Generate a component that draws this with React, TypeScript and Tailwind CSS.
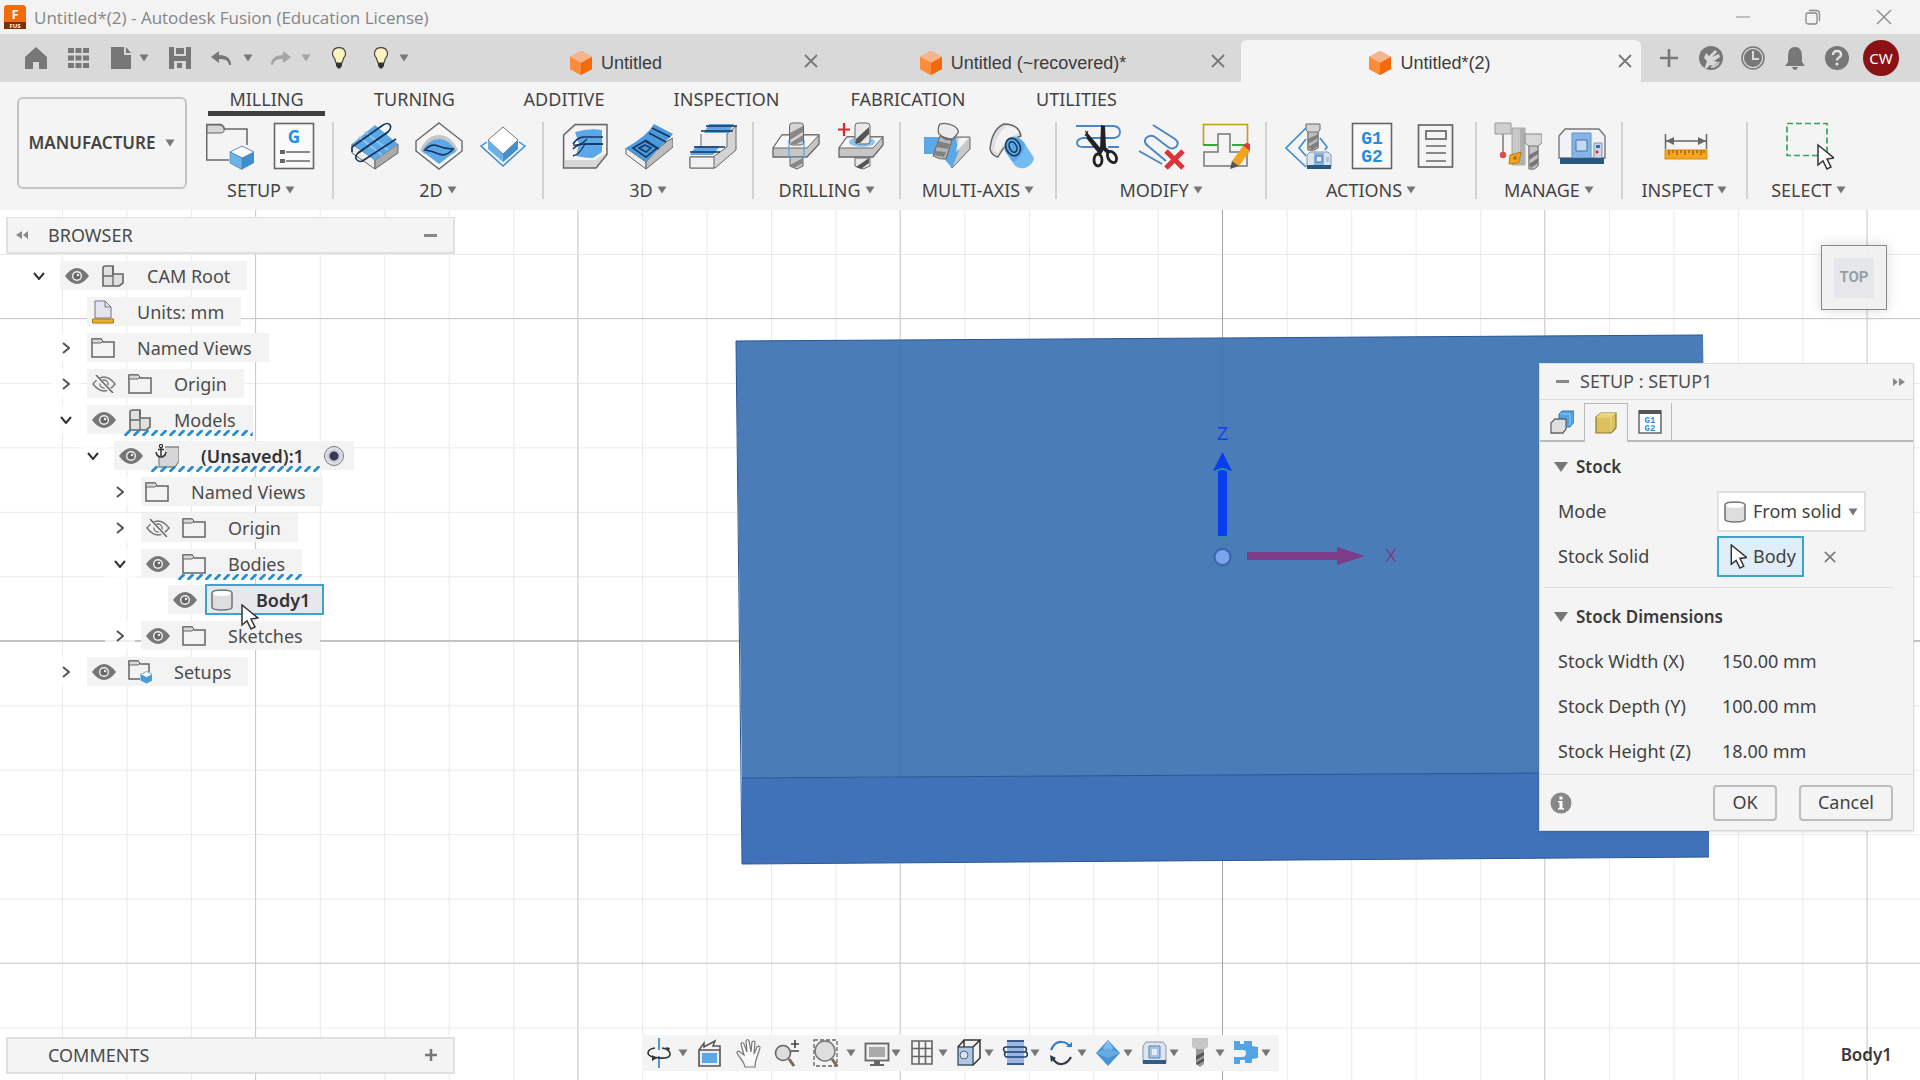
import React, { useId, useState } from "react";

type IconProps = { children: React.ReactNode; size?: string; box?: string };

function Svg({ children, size = "w-12 h-12", box = "0 0 48 48" }: IconProps) {
  return (
    <svg viewBox={box} className={`${size} shrink-0`} fill="none" aria-hidden="true">
      {children}
    </svg>
  );
}

const BLUE = "#5ca8e6";
const NAVY = "#15355c";
const LINE = "#666666";

function Caret({ className = "text-[#777777]" }: { className?: string }) {
  return (
    <svg viewBox="0 0 10 8" className={`h-2 w-[10px] shrink-0 ${className}`} aria-hidden="true">
      <path d="M0.5 0.5h9L5 7.5z" fill="currentColor" />
    </svg>
  );
}

/* ---------- Ribbon icons ---------- */

const SetupIcon = () => (
  <Svg>
    <path d="M23 38H0.700V2.500H14q3 0 4.500 4.500H41v16" stroke={LINE} strokeWidth="1.500" />
    <path d="M1 3h13q3 0 4 4t-4 4H1z" fill="#d6d6d6" stroke={LINE} />
    <path d="M36 24l12 6v11l-12 6.500-12-6.500V30z" fill="#3f8fce" />
    <path d="M36 24l12 6-12 6-12-6z" fill="#f8fbff" stroke="#4c7fa8" strokeWidth=".8" />
    <path d="M24 30l12 6v11.500L24 41z" fill="#6db4ea" stroke="#4c7fa8" strokeWidth=".6" />
  </Svg>
);

const GDocIcon = () => (
  <Svg>
    <rect x="4.500" y="1.500" width="39" height="45" fill="#fafafa" stroke={LINE} strokeWidth="1.600" />
    <text x="24" y="21" textAnchor="middle" fontFamily="Noto Sans, sans-serif" fontWeight="700" fontSize="17" fill="#1f8de0">G</text>
    <path d="M10 28h5v4h-5zM10 37h5v4h-5z" fill="#666" />
    <path d="M16 30h24M16 39h24" stroke={LINE} strokeWidth="1.400" />
  </Svg>
);

const Face2dIcon = () => (
  <Svg>
    <path d="M1 22v9l23 16V38z" fill="#ededed" stroke={LINE} />
    <path d="M47 22v9L24 47V38z" fill="#a9a9a9" stroke={LINE} />
    <path d="M24 3l23 19-23 16L1 22z" fill={BLUE} />
    <path d="M14 10l23 18M8 15l23 18" stroke="#8cc4f0" strokeWidth="2" />
    <path d="M1 25L32 3q5-3 7 0t-2 7L7 31q-4 4-1 7 3 3 7 0L45 17M1 25v5" stroke={NAVY} strokeWidth="1.600" />
    <path d="M7 31L37 10" stroke={NAVY} strokeWidth="1.600" />
  </Svg>
);

const Pocket2dIcon = () => (
  <Svg>
    <path d="M24 1l23 18v10L24 47 1 29V19z" fill="#f6f6f6" stroke={LINE} strokeWidth="1.400" />
    <path d="M5 28q7-15 19-15t19 15l-4 4H9z" fill="#c6c6c6" />
    <path d="M7 29q7-12 17-12t17 12L24 42z" fill={BLUE} />
    <path d="M10 28q6-7 13-4t15 3q-7 8-14 5t-14-4z" stroke={NAVY} strokeWidth="1.600" />
  </Svg>
);

const Contour2dIcon = () => (
  <Svg>
    <path d="M24 5l15 13-15 14L9 18z" fill="#fff" stroke="#777" />
    <path d="M9 18l15 14 15-14v9L24 40 9 27z" fill="#69b0e8" />
    <path d="M24 32l15-14v9L24 40z" fill="#478fcb" />
    <path d="M8 20l-6 4 22 20 22-20-6-4" stroke="#3c8fd0" strokeWidth="1.500" />
  </Svg>
);

const Adaptive3dIcon = () => (
  <Svg>
    <path d="M14 2.500h32v30L35 46H2.500V13z" fill="#d8d8d8" stroke={LINE} strokeWidth="1.400" />
    <path d="M15 4h30v27L34 38H4V14z" fill="#f4f4f4" />
    <path d="M14 10q14-4 27-2v22l-9 6q-9 0-17-2l3-12z" fill={BLUE} />
    <path d="M42 15H22q-6 1-10 7M42 22H24q-8 0-12 5" stroke={NAVY} strokeWidth="1.700" />
    <path d="M12 23q8 1 14-6M12 34q6-1 12-12h18" stroke={NAVY} strokeWidth="1.300" />
  </Svg>
);

const Surface3dIcon = () => (
  <Svg>
    <path d="M1 26l20 14v7L1 32z" fill="#eee" stroke={LINE} />
    <path d="M48 16v9L21 47v-7Q38 20 48 16z" fill="#bdbdbd" stroke={LINE} />
    <path d="M29 2l19 10Q38 22 21 40L1 26Q22 14 29 2z" fill="#4a9ade" />
    <path d="M27 6l18 9M24 11l17 9M20 18l14 9M20 19L8 26l13 9 11-9zM20 23l-6 3 7 4 5-4z" stroke={NAVY} strokeWidth="1.500" />
  </Svg>
);

const Steep3dIcon = () => (
  <Svg>
    <path d="M12 12h26v16H12z" fill="#f1f1f1" />
    <path d="M47 4v24L26 46H1V35h23l14-10V12z" fill="#d4d4d4" stroke={LINE} />
    <path d="M1 35h24v11H1z" fill="#f1f1f1" stroke={LINE} />
    <path d="M12 12v12" stroke={LINE} />
    <path d="M20 2h25l-6 9H15zM7 24h24l-7 9H1z" fill={BLUE} />
    <path d="M17 4h31M12 9h32M5 25h31M1 30h30" stroke={NAVY} strokeWidth="1.700" />
  </Svg>
);

const DrillIcon = () => (
  <Svg>
    <path d="M10 13h37v9L35 35H1v-9z" fill="#c6c6c6" stroke={LINE} strokeWidth="1.300" />
    <path d="M10 13h37L35 26H1z" fill="#f6f6f6" stroke={LINE} />
    <path d="M17 18v17h15V18" stroke={BLUE} strokeWidth="1.300" />
    <rect x="17.500" y="1" width="14" height="22" rx="3" fill="#d5d5d5" stroke={LINE} />
    <path d="M18 11l13-7v6l-13 8zM18 21l13-8v6l-9 4z" fill="#888" />
    <path d="M18 35h13v9l-6 3-7-3z" fill="#c8c8c8" stroke={LINE} />
    <path d="M18 43l13-7v5l-9 5z" fill="#888" />
  </Svg>
);

const DrillPlusIcon = () => (
  <Svg>
    <path d="M11 15h36v8L37 35H3v-9z" fill="#c6c6c6" stroke={LINE} strokeWidth="1.300" />
    <path d="M11 15h36L37 26H3z" fill="#f6f6f6" stroke={LINE} />
    <ellipse cx="26" cy="20" rx="13" ry="5" fill="#8cc4f0" />
    <rect x="19" y="1" width="15" height="21" rx="3" fill="#e8e8e8" stroke={LINE} />
    <path d="M20 17L33 5v7l-9 9h-4z" fill="#555" />
    <path d="M19 36h15v8l-7 3-8-3z" fill="#e8e8e8" stroke={LINE} />
    <path d="M20 45l13-9v5l-8 6z" fill="#555" />
    <path d="M2 7.500h12M8 1v13" stroke="#e0242c" strokeWidth="2.200" />
  </Svg>
);

const MultiAxisIcon = () => (
  <Svg>
    <path d="M1 15h46v12L29 46 19 32H1z" fill="#d8d8d8" />
    <path d="M33 15h14v12L29 46l-5-9z" fill="#c9c9c9" stroke={LINE} />
    <path d="M1 15h31l4 14-7 17-12-14H1z" fill={BLUE} />
    <path d="M36 16h10L33 30z" fill="#f3f3f3" />
    <path d="M17 2q6-2 14 2 5 3 4 7l-5 6q-9 0-14-5-2-6 1-10z" fill="#ececec" stroke={LINE} strokeWidth="1.300" />
    <path d="M17 14q5 5 12 4l-6 19q-6 1-13-3z" fill="#b5b5b5" stroke={LINE} />
    <path d="M15 19l12 3-2 5-12-2zM12 29l11 1-2 5-10-2z" fill="#808080" />
  </Svg>
);

const FlowIcon = () => (
  <Svg>
    <path d="M3 27Q5 7 17 2q15 0 17 12-14 4-23 21-6-1-8-8z" fill="#dedede" stroke={LINE} strokeWidth="1.400" />
    <path d="M7 28Q10 10 20 4q9 1 12 7-14 5-21 20z" fill="#f2f2f2" />
    <path d="M22 16q9-4 16 6l9 14q-1 7-9 10-9 1-12-5l-8-12q-1-9 4-13z" fill="#74bbf2" />
    <path d="M22 16q9-4 16 6-1 12-12 18l-8-11q-1-9 4-13z" fill={BLUE} />
    <ellipse cx="26" cy="25" rx="7" ry="9" transform="rotate(-25 26 25)" stroke={NAVY} strokeWidth="1.600" />
    <ellipse cx="26" cy="25" rx="3.500" ry="5.500" transform="rotate(-25 26 25)" stroke={NAVY} strokeWidth="1.500" />
  </Svg>
);

const TrimIcon = () => (
  <Svg>
    <path d="M2 4h38q6 1 6 6t-6 6H9q-6 1-6 5t6 4h13M34 25h11" stroke="#4b86c6" strokeWidth="1.800" />
    <path d="M27 3l4 1 1 22-6 1zM11 8l18 21-4 3L13 17z" fill="#222" />
    <path d="M14 9l-3 5" stroke="#222" strokeWidth="1.200" />
    <ellipse cx="24" cy="38" rx="4" ry="6" stroke="#222" strokeWidth="2.800" />
    <ellipse cx="38" cy="35" rx="4" ry="6" transform="rotate(-30 38 35)" stroke="#222" strokeWidth="2.800" />
    <path d="M25 32l4-7 6 6" stroke="#222" strokeWidth="4" />
  </Svg>
);

const DeletePassIcon = () => (
  <Svg>
    <path d="M15 3l22 14q5 4 1 8-4 3-8 0L17 15q-5-3-9 1-3 4 2 8l18 15M1 29l23 13" stroke="#4b86c6" strokeWidth="2" />
    <path d="M28 29l17 17M45 29L28 46" stroke="#dc3238" strokeWidth="5" />
  </Svg>
);

const EditPassIcon = () => (
  <Svg>
    <path d="M1.500 23V2.500h44V23" stroke="#c49b1c" strokeWidth="1.600" />
    <path d="M1 23h15M30 23h16" stroke="#38a838" strokeWidth="2" />
    <path d="M16 30H2v14h43V30H28V12H16z" fill="#f4f4f4" stroke="#777" strokeWidth="1.500" />
    <path d="M30 39l11-15 7 5-11 15z" fill="#f3a31c" />
    <path d="M41 24l3-3q5 0 6 4l-2 4z" fill="#e23a3a" />
    <path d="M30 39l7 5-9 3z" fill="#555" />
  </Svg>
);

const SimulateIcon = () => (
  <Svg>
    <path d="M22 6L2 26l20 19M22 17l-7 9 7 8M36 16l7 9-2 3" stroke="#3c8fd0" strokeWidth="1.700" />
    <path d="M22 2h14v6l-2 2v16l-4 2h-6V10l-2-2z" fill="#d4d4d4" stroke={LINE} />
    <path d="M24 10h10v16l-4 2h-6z" fill="#bdbdbd" stroke={LINE} strokeWidth=".8" />
    <path d="M24 17l10-5v4l-10 6zM24 25l10-6v5l-6 4z" fill="#808080" />
    <path d="M23 33l3-3h18l3 3v12H23z" fill="#dbe2ec" stroke="#8296ad" />
    <path d="M23 43h24v4H23z" fill="#28587f" />
    <path d="M30 31h10v12H30z" fill="#86b4e4" />
    <path d="M32 34h6v6h-6z" fill="#dceafa" stroke="#3f73aa" />
    <path d="M42 35h3v5h-3z" fill="#b3c2da" />
  </Svg>
);

const PostIcon = () => (
  <Svg>
    <rect x="4.500" y="1.500" width="39" height="45" fill="#fafafa" stroke={LINE} strokeWidth="1.600" />
    <g fontFamily="Liberation Mono, monospace" fontWeight="700" fontSize="18" fill="#1f8de0" textAnchor="middle">
      <text x="24" y="22">G1</text>
      <text x="24" y="40">G2</text>
    </g>
  </Svg>
);

const SheetIcon = () => (
  <Svg>
    <rect x="6.500" y="3" width="34" height="42" stroke={LINE} strokeWidth="1.700" />
    <rect x="14" y="9" width="20" height="8" stroke={LINE} strokeWidth="1.700" />
    <path d="M14 24h20M14 31h20M14 39h20" stroke={LINE} strokeWidth="1.700" />
  </Svg>
);

const ToolLibIcon = () => (
  <Svg>
    <path d="M1 1h16v11H1z" fill="#d0d0d0" stroke="#999" />
    <path d="M8 12h2v18H8z" fill="#999" />
    <circle cx="9" cy="33" r="3.200" fill="#e24a4a" />
    <path d="M18 6h13v37H18z" fill="#c9c9c9" stroke="#999" strokeWidth=".8" />
    <path d="M26 6h5v37h-5z" fill="#b0b0b0" />
    <path d="M16 33l11-3-2 11-10 1z" fill="#f0a31c" stroke="#a66f0c" strokeWidth=".8" />
    <circle cx="21" cy="36" r="1.800" fill="#a66f0c" />
    <path d="M31 12h17v9l-4 3v20l-4 3h-5V24l-4-3z" fill="#d8d8d8" stroke="#888" />
    <path d="M35 24h9v20l-4 3h-5z" fill="#c4c4c4" stroke="#777" />
    <path d="M35 33l9-5v4l-9 6zM35 42l9-6v5l-7 5z" fill="#777" />
  </Svg>
);

const MachineIcon = () => (
  <Svg>
    <path d="M1 14l6-7h34l6 7v22H1z" fill="#f0f2f5" stroke="#777" strokeWidth="1.400" />
    <path d="M14 11h19v25H14z" fill="#86b4e4" stroke="#5f93c8" />
    <path d="M18 18h11v11H18z" fill="#c5daf2" stroke="#3f73aa" />
    <path d="M36 21h8v15h-8z" fill="#cbd6e6" stroke="#8294ad" />
    <path d="M38 23h4v3h-4z" fill="#356ea8" />
    <circle cx="39" cy="30" r="1.400" fill="#d22" />
    <path d="M2 36h44v6H2z" fill="#28587f" />
  </Svg>
);

const MeasureIcon = () => (
  <Svg>
    <path d="M3.500 12v15M44.500 12v15M4 19h40" stroke={LINE} strokeWidth="1.500" />
    <path d="M4 19l8-4v8zM44 19l-8-4v8z" fill={LINE} />
    <rect x="3" y="28" width="42" height="9" fill="#f5a61c" stroke="#d88a10" />
    <path d="M7 28v5M11 28v3M15 28v5M19 28v3M23 28v5M27 28v3M31 28v5M35 28v3M39 28v5M42 28v3" stroke="#7a4d08" />
  </Svg>
);

const PointerShape = () => <path d="M0 0v20l5-4 4 8 4-2-4-8 7-1z" fill="#fff" stroke="#333" strokeWidth="1.500" />;

const SelectIcon = () => (
  <Svg>
    <rect x="1" y="1.500" width="40" height="32" stroke="#35a35a" strokeWidth="1.700" strokeDasharray="6 3" />
    <g transform="translate(32 23)"><PointerShape /></g>
  </Svg>
);

/* ---------- Application bar icons ---------- */

const small = "w-[22px] h-[22px]";
const DocCube = () => (
  <Svg size="w-6 h-6" box="0 0 24 24">
    <path d="M12 0l11 6v12l-11 6-11-6V6z" fill="#f47b20" />
    <path d="M12 0l11 6-11 6L1 6z" fill="#f6b58c" />
    <path d="M1 6l11 6v12L1 18z" fill="#fb8d3a" />
    <path d="M12 12l11-6v12l-11 6z" fill="#f26a0a" />
  </Svg>
);
const HomeIcon = () => <Svg size={small} box="0 0 22 22"><path d="M11 0l11 10v12h-8v-7H8v7H0V10z" fill="#777" /></Svg>;
const AppsIcon = () => (
  <Svg size={small} box="0 0 22 22">
    <path d="M1 1h6v5H1zM8.500 1h6v5h-6zM16 1h6v5h-6zM1 8.500h6v5H1zM8.500 8.500h6v5h-6zM16 8.500h6v5h-6zM1 16h6v5H1zM8.500 16h6v5h-6zM16 16h6v5h-6z" fill="#777" />
  </Svg>
);
const FileIcon = () => <Svg size="w-5 h-[22px]" box="0 0 20 22"><path d="M0 0h13v8h7v14H0zM15 0l5 6h-5z" fill="#777" /></Svg>;
const SaveIcon = () => (
  <Svg size={small} box="0 0 22 22">
    <path d="M0 0h22v22H0z" fill="#777" />
    <path d="M5 0h12v9H5zM5 14h12v8H5z" fill="#d9d9d9" />
    <path d="M7 1h8v6H7zM8 16h5v5H8z" fill="#777" />
  </Svg>
);
const UndoIcon = ({ color = "#777" }: { color?: string }) => (
  <Svg size="w-5 h-[14px]" box="0 0 20 14">
    <path d="M8 0L0 6l8 6V8q9-1 10 6h2Q20 4 8 4z" fill={color} />
  </Svg>
);
const BulbIcon = () => (
  <Svg size="w-[14px] h-[22px]" box="0 0 14 22">
    <path d="M7 .7c7 0 8 7 4.500 10.500L10 16H4l-1.500-4.800C-1 7.700 0 .7 7 .7z" fill="#fdf3bd" stroke="#444" strokeWidth="1.200" />
    <path d="M4 16h6v3l-2 2.500H6L4 19z" fill="#333" />
  </Svg>
);
const CloseIcon = ({ className = "w-[14px] h-[14px]" }: { className?: string }) => (
  <Svg size={className} box="0 0 14 14"><path d="M1 1l12 12M13 1L1 13" stroke="#777" strokeWidth="1.800" /></Svg>
);

/* ---------- Browser tree icons ---------- */

const EyeIcon = () => (
  <Svg size="w-6 h-4" box="0 0 24 16">
    <path d="M0 8q12-16 24 0-12 16-24 0z" fill="#777" />
    <circle cx="12" cy="8" r="5" fill="#f3f3f3" /><circle cx="12" cy="8" r="3.600" fill="#666" /><circle cx="13" cy="7" r="1.200" fill="#f3f3f3" />
  </Svg>
);
const EyeOffIcon = () => (
  <Svg size="w-6 h-[18px]" box="0 0 24 18">
    <path d="M1 9q11-14 22 0-11 14-22 0z" stroke="#777" strokeWidth="1.500" /><circle cx="12" cy="9" r="4" stroke="#777" strokeWidth="1.500" />
    <path d="M3 1l18 17" stroke="#f3f3f3" strokeWidth="4" /><path d="M4 0l17 18" stroke="#666" strokeWidth="1.500" />
  </Svg>
);
const FolderIcon = () => (
  <Svg size="w-6 h-5" box="0 0 24 20">
    <path d="M1 1h9l2 3h11v15H1z" stroke="#666" strokeWidth="1.500" /><path d="M1 1h9l2 2-2 2H1z" fill="#d8d8d8" stroke="#666" />
  </Svg>
);
const FolderCubeIcon = () => (
  <Svg size="w-6 h-6" box="0 0 24 24">
    <path d="M12 19H1V1h9l2 3h9v8" stroke="#666" strokeWidth="1.500" /><path d="M1 1h9l2 2-2 2H1z" fill="#d8d8d8" stroke="#666" />
    <path d="M18.500 11.500l6 3v6l-6 3-6-3v-6z" fill="#4a9bd6" /><path d="M18.500 11.500l6 3-6 3-6-3z" fill="#f6faff" stroke="#4c7fa8" strokeWidth=".6" />
  </Svg>
);
const ComponentIcon = () => (
  <Svg size="w-6 h-6" box="0 0 24 24">
    <path d="M2 4q0-2 3-2h7v8h10v9l-4 3H2z" fill="#e0e0e0" stroke="#666" strokeWidth="1.600" /><path d="M2 12h10v10M12 10v3M12 2v9" stroke="#666" strokeWidth="1.300" />
  </Svg>
);
const UnitsIcon = () => (
  <Svg size="w-6 h-6" box="0 0 24 24">
    <path d="M4 1h10l6 6v11H4z" fill="#e4e4f2" stroke="#777" /><path d="M14 1v6h6" stroke="#777" /><path d="M1.500 19h21v4h-21z" fill="#e8b12a" stroke="#a87a10" />
  </Svg>
);
const AnchorCubeIcon = () => (
  <Svg size="w-6 h-6" box="0 0 24 24">
    <path d="M4 3h20v14l-4 6H4z" fill="#d4d6d8" stroke="#888" strokeWidth="1.300" />
    <path d="M-1 0h11v13H-1z" fill="#f3f3f3" />
    <circle cx="6" cy="2" r="1.600" stroke="#333" strokeWidth="1.200" /><path d="M6 3v9M3 5.500h6M1 8q1 5 5 5t5-5" stroke="#333" strokeWidth="1.500" />
  </Svg>
);
const BodyIcon = () => (
  <Svg size="w-6 h-6" box="0 0 24 24">
    <path d="M2 5v14q0 3 10 3t10-3V5q0-3-10-3T2 5z" fill="#dedede" stroke="#777" strokeWidth="1.600" /><path d="M3 5q0 3 9 3t9-3q-1-2-9-2T3 5z" fill="#fff" />
  </Svg>
);

type Node = { depth: number; open?: boolean; leaf?: boolean; eye?: "on" | "off"; icon: React.ReactNode; label: string; hatch?: boolean; bold?: boolean; selected?: boolean; radio?: boolean };

const tree: Node[] = [
  { depth: 0, open: true, eye: "on", icon: <ComponentIcon />, label: "CAM Root" },
  { depth: 1, leaf: true, icon: <UnitsIcon />, label: "Units: mm" },
  { depth: 1, icon: <FolderIcon />, label: "Named Views" },
  { depth: 1, eye: "off", icon: <FolderIcon />, label: "Origin" },
  { depth: 1, open: true, eye: "on", icon: <ComponentIcon />, label: "Models", hatch: true },
  { depth: 2, open: true, eye: "on", icon: <AnchorCubeIcon />, label: "(Unsaved):1", hatch: true, bold: true, radio: true },
  { depth: 3, icon: <FolderIcon />, label: "Named Views" },
  { depth: 3, eye: "off", icon: <FolderIcon />, label: "Origin" },
  { depth: 3, open: true, eye: "on", icon: <FolderIcon />, label: "Bodies", hatch: true },
  { depth: 4, leaf: true, eye: "on", icon: <BodyIcon />, label: "Body1", bold: true, selected: true },
  { depth: 3, eye: "on", icon: <FolderIcon />, label: "Sketches" },
  { depth: 1, eye: "on", icon: <FolderCubeIcon />, label: "Setups" },
];
const indents = ["pl-[24px]", "pl-[51px]", "pl-[78px]", "pl-[105px]", "pl-[132px]"];

function Hatch() {
  const id = `hatch-${useId().replace(/[^a-zA-Z0-9]/g, "")}`;
  return (
    <svg className="absolute bottom-[-2px] left-0 h-[6px] w-full" aria-hidden="true">
      <defs>
        <pattern id={id} width="9" height="6" patternUnits="userSpaceOnUse">
          <path d="M1.500 5l4-4" stroke="#2790cc" strokeWidth="2.800" strokeLinecap="round" />
        </pattern>
      </defs>
      <rect width="100%" height="6" fill={`url(#${id})`} />
    </svg>
  );
}

function TreeRow({ node }: { node: Node }) {
  return (
    <li className={`flex h-[29px] items-stretch ${indents[node.depth]}`}>
      {node.leaf ? (
        <span className="mr-[6px] w-[30px]" />
      ) : (
        <button className="mr-[6px] flex w-[30px] items-center justify-center bg-white/70" aria-label={`Toggle ${node.label}`}>
          {node.open ? (
            <Svg size="w-3 h-2" box="0 0 12 8"><path d="M1 1l5 6 5-6" stroke="#333" strokeWidth="2" /></Svg>
          ) : (
            <Svg size="w-2 h-3" box="0 0 8 12"><path d="M1 1l6 5-6 5" stroke="#555" strokeWidth="2" /></Svg>
          )}
        </button>
      )}
      {node.eye && (
        <button className="flex w-[37px] items-center bg-[#f3f3f3] pl-[5px]" aria-label={`Visibility of ${node.label}`}>
          {node.eye === "on" ? <EyeIcon /> : <EyeOffIcon />}
        </button>
      )}
      <div className={`relative flex items-center ${node.selected ? "-my-px border-2 border-[#3ba6c8] bg-[#e7e7ec] pr-3 pl-[3px]" : "bg-[#f3f3f3] pr-[17px] pl-[4px]"}`}>
        {node.icon}
        <button className={`ml-[22px] text-[18px] leading-6 whitespace-nowrap ${node.bold ? "font-semibold text-[#333]" : "text-[#4c4c4c]"}`}>{node.label}</button>
        {node.hatch && <Hatch />}
      </div>
      {node.radio && (
        <label className="flex items-center bg-[#f3f3f3] pr-[10px] pl-[3px]">
          <input type="radio" name="active" defaultChecked aria-label="Activate component" className="h-5 w-5 appearance-none rounded-full border border-[#777] bg-[radial-gradient(circle,#333b50_0_4px,#c3c9d6_5px,#f0f0f4_10px)]" />
        </label>
      )}
    </li>
  );
}

/* ---------- Navigation bar icons ---------- */

const navBox = "w-[26px] h-[30px]";
const N = ({ children }: { children: React.ReactNode }) => <Svg size={navBox} box="0 0 26 30">{children}</Svg>;
const navItems: { name: string; width: string; caret: boolean; icon: React.ReactNode }[] = [
  { name: "Orbit", width: "w-[50px]", caret: true, icon: <N><path d="M13 0v12M13 18v12" stroke="#4b9ad8" strokeWidth="2" /><path d="M9 10q-7 1-7 5t11 5 11-4-8-6" stroke="#333" strokeWidth="1.600" /><path d="M6 17l5 3-5 3zM20 9l4 1-2 4z" fill="#333" /></N> },
  { name: "Look at", width: "w-[40px]", caret: false, icon: <N><path d="M3 12h21v16H3z" fill="#eee" stroke="#555" strokeWidth="1.600" /><path d="M3 12l5-7v4L19 3l-2 5h7v4" stroke="#555" strokeWidth="1.500" /><path d="M6 15h15v10H6z" fill={BLUE} /></N> },
  { name: "Pan", width: "w-[38px]", caret: false, icon: <N><path d="M9 29q-1-5-4-8l-4-6q0-3 3-1l4 3L5 6q1-3 3 0l3 8-1-11q2-3 3 0l2 11 1-10q2-2 3 0l-1 12 3-7q3-2 3 1l-4 12q-1 3-1 7z" fill="#fafafa" stroke="#777" strokeWidth="1.200" /></N> },
  { name: "Zoom", width: "w-[39px]", caret: false, icon: <N><path d="M15 21l5 7" stroke="#77694d" strokeWidth="3" /><circle cx="9" cy="15" r="7.500" fill="#dcdcdc" stroke="#666" strokeWidth="1.600" /><path d="M17 6h8M21 2v8M17 13h8" stroke="#444" strokeWidth="1.600" /></N> },
  { name: "Fit", width: "w-[51px]", caret: true, icon: <N><rect x="1" y="2" width="23" height="26" stroke="#666" strokeWidth="1.300" strokeDasharray="4 2" /><path d="M19 21l5 7" stroke="#77694d" strokeWidth="3" /><circle cx="12" cy="13" r="10" fill="#dedede" stroke="#777" strokeWidth="1.500" /></N> },
  { name: "Display settings", width: "w-[45px]", caret: true, icon: <N><rect x="1.500" y="5.500" width="23" height="17" fill="#eee" stroke="#666" strokeWidth="1.800" /><path d="M5 9h16v10H5z" fill="#aaa" /><path d="M10 23h6v3h4v2H6v-2h4z" fill="#666" /></N> },
  { name: "Grid and snaps", width: "w-[47px]", caret: true, icon: <N><path d="M3 3h20v23H3zM10 3v23M16.500 3v23M3 10.500h20M3 18.500h20" stroke="#666" strokeWidth="1.600" /></N> },
  { name: "Viewports", width: "w-[46px]", caret: true, icon: <N><path d="M2 9h15v18H2z" fill="#afc8ea" stroke="#456" strokeWidth="1.400" /><path d="M2 9l6-7h16l-7 7M24 2v18l-7 7M8 2v7" stroke="#333" strokeWidth="1.500" /><circle cx="8" cy="17" r="4" fill="#d6e2f2" stroke="#567" /></N> },
  { name: "Analysis", width: "w-[46px]", caret: true, icon: <N><path d="M5 2h17v25H5z" fill="#9cb7e0" /><path d="M5 3h17M5 26h17M3 9h20q3 2 0 5H4q-3 2 0 5h20M3 9q-3 2 0 5M24 14q3 2 0 5" stroke="#1d3c78" strokeWidth="1.600" /></N> },
  { name: "Refresh", width: "w-[47px]", caret: true, icon: <N><path d="M3 12Q7 3 14 4q5 0 8 5" stroke="#2f7fd0" strokeWidth="2.200" /><path d="M4 19q4 8 10 7 6-1 9-7" stroke="#303a48" strokeWidth="2.200" /><path d="M18 9h6V4z" fill="#2f7fd0" /><path d="M2 17l6 3-5 4z" fill="#303a48" /></N> },
  { name: "Toolpath", width: "w-[46px]", caret: true, icon: <N><path d="M13 2l12 13-12 13L1 15z" fill="#4a94d6" /><path d="M13 2l5 8-5 7-5-7z" fill="#82bcec" /><path d="M1 15l12-5 12 5-12 5z" fill="#66aae2" /></N> },
  { name: "Machine", width: "w-[46px]", caret: true, icon: <N><path d="M2 8l3-4h17l3 4v17H2z" fill="#dfe5ec" stroke="#8a96a5" /><path d="M8 8h11v12H8z" fill="#a5c3e6" stroke="#5684b5" /><path d="M11 11h5v6h-5z" fill="#e2edf8" /><path d="M2 22h23v4H2z" fill="#2f5d85" /></N> },
  { name: "Tool", width: "w-[46px]", caret: true, icon: <N><path d="M5 0h16v9l-3 2H8l-3-2z" fill="#c6c6c6" /><path d="M9 11h8v15l-4 3-4-3z" fill="#999" /><path d="M9 18l8-4v3l-8 5zM9 25l8-5v3l-7 4z" fill="#555" /></N> },
  { name: "Fixture", width: "w-[46px]", caret: true, icon: <N><path d="M1 3h6v3h4V3h8v5l6 1v11l-6 1v4h-7v-3H7v4H1v-7h9q3-1 3-4t-3-3H1z" fill="#54a4e4" /></N> },
];

/* ---------- Ribbon ---------- */

const groups: { label: string; width: string; icons: [string, () => React.JSX.Element][] }[] = [
  { label: "SETUP", width: "w-[144px]", icons: [["New setup", SetupIcon], ["NC program", GDocIcon]] },
  { label: "2D", width: "w-[210px]", icons: [["Face", Face2dIcon], ["2D pocket", Pocket2dIcon], ["2D contour", Contour2dIcon]] },
  { label: "3D", width: "w-[210px]", icons: [["Adaptive", Adaptive3dIcon], ["Pocket", Surface3dIcon], ["Steep and shallow", Steep3dIcon]] },
  { label: "DRILLING", width: "w-[147px]", icons: [["Drill", DrillIcon], ["Hole recognition", DrillPlusIcon]] },
  { label: "MULTI-AXIS", width: "w-[156px]", icons: [["Swarf", MultiAxisIcon], ["Flow", FlowIcon]] },
  { label: "MODIFY", width: "w-[210px]", icons: [["Trim", TrimIcon], ["Delete passes", DeletePassIcon], ["Edit", EditPassIcon]] },
  { label: "ACTIONS", width: "w-[210px]", icons: [["Simulate", SimulateIcon], ["Post process", PostIcon], ["Setup sheet", SheetIcon]] },
  { label: "MANAGE", width: "w-[146px]", icons: [["Tool library", ToolLibIcon], ["Machine library", MachineIcon]] },
  { label: "INSPECT", width: "w-[125px]", icons: [["Measure", MeasureIcon]] },
  { label: "SELECT", width: "w-[121px]", icons: [["Select", SelectIcon]] },
];

const ribbonTabs: [string, string][] = [
  ["MILLING", "w-[117px]"], ["TURNING", "w-[123px]"], ["ADDITIVE", "w-[120px]"], ["INSPECTION", "w-[149px]"], ["FABRICATION", "w-[158px]"], ["UTILITIES", "w-[123px]"],
];

function TitleBar() {
  return (
    <header className="flex h-[34px] items-center bg-[#f3f3f3] pl-1">
      <svg viewBox="0 0 22 24" className="h-6 w-[22px]" aria-hidden="true">
        <path d="M2 0h18l2 2v22H0V2z" fill="#f26b0f" /><path d="M0 17h22v7H0z" fill="#7d2f05" />
        <text x="11" y="14" textAnchor="middle" fontFamily="Noto Sans, sans-serif" fontWeight="700" fontSize="13" fill="#fff">F</text>
        <text x="11" y="23" textAnchor="middle" fontFamily="Noto Sans, sans-serif" fontWeight="700" fontSize="6" fill="#fff">FUS</text>
      </svg>
      <h1 className="ml-2 flex-1 pt-px font-['Open_Sans',sans-serif] text-[17px] text-[#858585]">Untitled*(2) - Autodesk Fusion (Education License)</h1>
      <div className="flex items-center pr-[26px]">
        <button aria-label="Minimize" className="flex w-[70px] justify-center"><Svg size="w-4 h-4" box="0 0 16 16"><path d="M1 8h14" stroke="#888" /></Svg></button>
        <button aria-label="Restore" className="flex w-[70px] justify-center"><Svg size="w-4 h-4" box="0 0 16 16"><rect x="1" y="4" width="11" height="11" rx="2" stroke="#888" strokeWidth="1.300" /><path d="M4 1.500h7q3.500 0 3.500 3.500v7" stroke="#888" strokeWidth="1.300" /></Svg></button>
        <button aria-label="Close" className="ml-[26px] flex w-5 justify-center"><Svg size="w-4 h-4" box="0 0 16 16"><path d="M1 1l14 14M15 1L1 15" stroke="#888" strokeWidth="1.300" /></Svg></button>
      </div>
    </header>
  );
}

function DocTab({ label, active }: { label: string; active?: boolean }) {
  return (
    <div className={`flex flex-1 items-center pt-1 ${active ? "rounded-t-md bg-[#f4f4f4]" : ""}`}>
      <button className="flex flex-1 items-center justify-center gap-2 text-[#3c3c3c]">
        <DocCube />
        <span className="font-['Liberation_Sans',sans-serif] text-[18px] leading-6">{label}</span>
      </button>
      <button aria-label={`Close ${label}`} className="mr-[9px] pb-1"><CloseIcon /></button>
    </div>
  );
}

function AppBar() {
  const r = "flex w-[42px] justify-center";
  return (
    <div className="flex h-[48px] items-stretch bg-[#d9d9d9] pt-[6px] pr-[21px] pl-[25px]">
      <div className="flex w-[402px] items-center pb-[6px]">
        <button aria-label="Home"><HomeIcon /></button>
        <button aria-label="Show data panel" className="ml-5"><AppsIcon /></button>
        <button aria-label="File" className="ml-[22px] flex items-center gap-2"><FileIcon /><Caret /></button>
        <button aria-label="Save" className="ml-5"><SaveIcon /></button>
        <button aria-label="Undo" className="ml-5 flex items-center gap-3"><UndoIcon /><Caret /></button>
        <button aria-label="Redo" className="ml-[18px] flex items-center gap-[10px]"><span className="-scale-x-100"><UndoIcon color="#a5a5a5" /></span><Caret className="text-[#a5a5a5]" /></button>
        <button aria-label="Tips" className="ml-[21px]"><BulbIcon /></button>
        <button aria-label="More tips" className="ml-7 flex items-center gap-[11px]"><BulbIcon /><Caret /></button>
      </div>
      <div className="flex flex-1 gap-[7px]">
        <DocTab label="Untitled" />
        <DocTab label="Untitled (~recovered)*" />
        <DocTab label="Untitled*(2)" active />
      </div>
      <div className="flex items-center pb-[6px] pl-[7px]">
        <button aria-label="New design" className={r}><Svg size="w-5 h-5" box="0 0 20 20"><path d="M10 1v18M1 10h18" stroke="#777" strokeWidth="2.600" /></Svg></button>
        <button aria-label="Extensions" className={r}><Svg size="w-6 h-6" box="0 0 24 24"><circle cx="12" cy="12" r="12" fill="#777" /><path d="M5 24l3-9-3-3 2-5 3 3 6-6 2 2-5 5 7-3 1 3-6 4 4 1-4 4-4-1-3 3z" fill="#d9d9d9" /><path d="M12 21q6 0 8-5" stroke="#d9d9d9" strokeWidth="1.500" /></Svg></button>
        <button aria-label="Job status" className={r}><Svg size="w-6 h-6" box="0 0 24 24"><circle cx="12" cy="12" r="11" stroke="#777" strokeWidth="1.500" /><circle cx="12" cy="12" r="9" fill="#777" /><path d="M12 5v8h6" stroke="#d9d9d9" strokeWidth="2" /></Svg></button>
        <button aria-label="Notifications" className={r}><Svg size="w-5 h-6" box="0 0 20 24"><path d="M10 1q7 0 7 9v6l3 4H0l3-4v-6q0-9 7-9zM7 21h6q-1 3-3 3t-3-3z" fill="#777" /></Svg></button>
        <button aria-label="Help" className={r}><Svg size="w-6 h-6" box="0 0 24 24"><circle cx="12" cy="12" r="12" fill="#777" /><path d="M8 9q0-4 4-4t4 3.500q0 2-2 3-2 1-2 3" stroke="#e4e4e4" strokeWidth="2.400" /><circle cx="12" cy="18" r="1.600" fill="#e4e4e4" /></Svg></button>
        <button aria-label="Account" className="ml-[5px] h-9 w-9 rounded-full bg-[#8a1214] font-['Noto_Sans',sans-serif] text-[15px] text-white">CW</button>
      </div>
    </div>
  );
}

function Ribbon() {
  return (
    <div className="flex h-[128px] bg-[#f4f4f4] pl-[17px] text-[#444]">
      <button className="mt-[15px] flex h-[92px] w-[170px] items-center justify-center gap-[10px] rounded-md border-2 border-[#c4c4c4] text-[17px] font-semibold">
        MANUFACTURE <Caret />
      </button>
      <div className="flex flex-col">
        <nav className="ml-[21px] flex gap-[28px]">
          {ribbonTabs.map(([t, w]) => (
            <button key={t} className={`h-[34px] border-b-[5px] pt-[5px] text-[18px] leading-6 ${w} ${t === "MILLING" ? "border-[#3f3f3f]" : "border-transparent"}`}>{t}</button>
          ))}
        </nav>
        <div className="mt-[6px] ml-[3px] flex">
          {groups.map((g, i) => (
            <section key={g.label} className={`flex h-[77px] flex-col items-center ${g.width} ${i < groups.length - 1 ? "border-r-2 border-[#d2d2d2]" : ""}`}>
              <div className="flex gap-4 pl-[2px]">
                {g.icons.map(([name, I]) => (
                  <button key={name} aria-label={name}><I /></button>
                ))}
              </div>
              <button className="mt-[8px] -mb-2 flex items-center gap-1 text-[18px] leading-6 whitespace-nowrap">{g.label}<Caret /></button>
            </section>
          ))}
        </div>
      </div>
    </div>
  );
}

/* ---------- Canvas ---------- */

function Viewport() {
  return (
    <svg className="absolute inset-0 h-full w-full" aria-hidden="true">
      <defs>
        <pattern id="minor" x="-2.500" y="44" width="64.460" height="64.460" patternUnits="userSpaceOnUse">
          <path d="M0.500 0v65M0 0.500h65" stroke="#eaeaea" />
        </pattern>
        <pattern id="major" x="255" y="108" width="322.300" height="322.300" patternUnits="userSpaceOnUse">
          <path d="M0.500 0v323M0 0.500h323" stroke="#cccccc" />
        </pattern>
      </defs>
      <rect width="100%" height="100%" fill="#fff" />
      <rect width="100%" height="100%" fill="url(#minor)" />
      <rect width="100%" height="100%" fill="url(#major)" />
      <path d="M1222.500 0v900M0 431h1920" stroke="#a9a9a9" />
      <path d="M736 131L1703 125 1709 563 742 568z" fill="#4a7db8" />
      <path d="M742 568L1709 562v85L742 654z" fill="#3f72b8" />
      <path d="M736 131L1703 125M736 131l6 523 967-7M742 568l967-6" stroke="#2a5596" fill="none" />
      <path d="M900.500 130v437M1222.500 128v90" stroke="#41719f" strokeOpacity=".5" />
      <path d="M1218 326v-66l-5 1 9.500-19 9.500 19-5-1v66z" fill="#0a3df0" />
      <path d="M1214 263q8-8 17 0M1218 326q4 5 9 0" stroke="#2c8f9b" strokeWidth="2" fill="none" />
      <path d="M1247 342h90v-5l28 9-28 9v-5h-90z" fill="#7e3d88" />
      <circle cx="1222.500" cy="347" r="8" fill="#7ba4ee" stroke="#3464ab" strokeWidth="2" />
      <g fontFamily="Liberation Sans, sans-serif" fontSize="18" textAnchor="middle">
        <text x="1222.500" y="230" fill="#1040ee">Z</text>
        <text x="1391" y="352" fill="#7e3d88">X</text>
      </g>
    </svg>
  );
}

function SectionTitle({ children }: { children: React.ReactNode }) {
  return (
    <h3 className="flex h-[45px] items-center gap-2 pl-[14px] text-[17px] font-semibold text-[#3a3a3a]">
      <svg viewBox="0 0 14 10" className="h-[10px] w-[14px]" aria-hidden="true"><path d="M0 0h14L7 10z" fill="#777" /></svg>
      {children}
    </h3>
  );
}

function SetupPanel() {
  const [mode, setMode] = useState("From solid");
  const label = "w-[158px] pl-[18px]";
  return (
    <aside className="w-[375px] border border-[#dcdcdc] bg-[#f4f4f4] text-[18px] text-[#424242] shadow">
      <header className="flex h-[36px] items-center border-b border-[#dcdcdc] pr-2 pl-[16px] text-[#505050]">
        <button aria-label="Collapse"><span className="block h-[3px] w-[13px] bg-[#888]" /></button>
        <h2 className="ml-[11px] flex-1">SETUP : SETUP1</h2>
        <button aria-label="Dock right"><Svg size="w-3 h-2" box="0 0 12 8"><path d="M0 0l5 4-5 4zM6 0l6 4-6 4z" fill="#888" /></Svg></button>
      </header>
      <div className="flex h-[42px] items-stretch pt-[3px]">
        <button aria-label="Setup" className="flex w-[44px] items-center justify-center border-b-2 border-[#b9b9b9]">
          <Svg size="w-6 h-6" box="0 0 24 24"><path d="M9 4l3-3h12v11l-4 5H9z" fill="#54a2e0" stroke="#2f78b4" /><path d="M10 4h10v12" stroke="#8cc8f6" /><path d="M1 13l4-4h11v10l-3 4H1z" fill="#dedede" stroke="#666" strokeWidth="1.300" /></Svg>
        </button>
        <button aria-label="Stock" className="flex w-[44px] items-center justify-center border-x border-t border-[#b9b9b9]">
          <Svg size="w-6 h-6" box="0 0 24 24"><path d="M2 6l5-4h15v15l-5 5H2z" fill="#dcc05e" stroke="#8d7830" strokeWidth="1.200" /><path d="M3 6h14v15" stroke="#f0dc90" /><path d="M2 6l5-4h15l-5 4z" fill="#ecd47c" /></Svg>
        </button>
        <button aria-label="Post process" className="flex w-[44px] items-center justify-center border-r border-b-2 border-[#b9b9b9]">
          <Svg size="w-6 h-6" box="0 0 24 24"><rect x="1" y="1" width="22" height="22" fill="#fff" stroke="#666" strokeWidth="1.500" /><path d="M1 0h22v4H1z" fill="#555" /><g fontFamily="Liberation Mono, monospace" fontWeight="700" fontSize="9" fill="#1f8de0" textAnchor="middle"><text x="12" y="13">G1</text><text x="12" y="21">G2</text></g></Svg>
        </button>
        <span className="flex-1 border-b-2 border-[#b9b9b9]" />
      </div>
      <div className="flex flex-col pt-[2px]">
        <SectionTitle>Stock</SectionTitle>
        <div className="flex h-[45px] items-center">
          <label htmlFor="mode" className={label}>Mode</label>
          <div className="ml-[19px] flex h-[41px] w-[149px] items-center border-2 border-[#dfdfdf] bg-white pl-1">
            <BodyIcon />
            <select id="mode" value={mode} onChange={(e) => setMode(e.target.value)} className="ml-[6px] min-w-0 flex-1 appearance-none">
              <option>From solid</option>
            </select>
            <span className="pointer-events-none mr-[6px] flex"><Caret /></span>
          </div>
        </div>
        <div className="flex h-[45px] items-center">
          <span className={label}>Stock Solid</span>
          <button className="ml-[19px] flex h-[41px] w-[87px] items-center gap-[6px] border-2 border-[#3ba6c8] bg-[#dfeef8] pl-[11px]">
            <Svg size="w-[17px] h-[26px]" box="-1 -1 17 27"><PointerShape /></Svg>
            Body
          </button>
          <button aria-label="Clear selection" className="ml-5"><CloseIcon className="h-3 w-3" /></button>
        </div>
        <hr className="mt-[8px] mr-5 ml-1 border-t border-[#dcdcdc]" />
        <div className="pt-[6px]">
          <SectionTitle>Stock Dimensions</SectionTitle>
          <dl>
            {[["Stock Width (X)", "150.00 mm"], ["Stock Depth (Y)", "100.00 mm"], ["Stock Height (Z)", "18.00 mm"]].map(([k, v]) => (
              <div key={k} className="flex h-[45px] items-center"><dt className={label}>{k}</dt><dd className="ml-6">{v}</dd></div>
            ))}
          </dl>
        </div>
      </div>
      <footer className="flex h-[56px] items-center border-t border-[#dcdcdc] pr-[20px] pl-[10px]">
        <button aria-label="Information" className="mr-auto"><Svg size="w-[22px] h-[22px]" box="0 0 22 22"><circle cx="11" cy="11" r="10.500" fill="#888" /><path d="M9.500 4.500h3v3h-3zM8 9h4.500v7H14v1.500H8V16h1.500v-5.500H8z" fill="#fff" /></Svg></button>
        <button className="h-[36px] w-[64px] rounded-sm border-2 border-[#bdbdbd]">OK</button>
        <button className="ml-[22px] h-[36px] w-[94px] rounded-sm border-2 border-[#bdbdbd]">Cancel</button>
      </footer>
    </aside>
  );
}

export default function App() {
  return (
    <div className="flex min-h-screen flex-col overflow-hidden bg-white font-['Noto_Sans',sans-serif]">
      <TitleBar />
      <AppBar />
      <Ribbon />
      <main className="relative flex flex-1 flex-col">
        <Viewport />
        <div className="relative flex flex-1 items-start justify-between pt-[7px] pl-[6px]">
          <div className="w-[449px]">
            <header className="flex h-[37px] items-center border-2 border-t border-[#e0e0e0] bg-[#f4f4f4] pr-4 pl-2 text-[18px] text-[#4a4a4a]">
              <button aria-label="Dock left"><Svg size="w-3 h-2" box="0 0 12 8"><path d="M6 0L0 4l6 4zM12 0L7 4l5 4z" fill="#888" /></Svg></button>
              <h2 className="ml-5 flex-1">BROWSER</h2>
              <button aria-label="Collapse browser"><span className="block h-[3px] w-[13px] bg-[#888]" /></button>
            </header>
            <div className="relative">
              <ul className="-ml-[6px] flex flex-col gap-[7px] pt-[7px]">
                {tree.map((n, i) => <TreeRow key={i} node={n} />)}
              </ul>
              <svg viewBox="-1 -1 18 28" className="absolute top-[350px] left-[235px] h-7 w-[18px]" aria-hidden="true"><PointerShape /></svg>
            </div>
          </div>
          <div className="flex flex-col items-end gap-[53px] pt-[28px] pr-[6px]">
            <button className="mr-[27px] flex h-[65px] w-[66px] items-center justify-center border border-[#888] bg-[#efeff0]/90 shadow-[0_0_12px_rgba(0,0,0,0.15)]">
              <span className="flex h-10 w-10 items-center justify-center bg-[#e6e7eb] font-['Roboto',sans-serif] text-[15px] font-bold text-[#9a9ea4]">TOP</span>
            </button>
            <SetupPanel />
          </div>
        </div>
        <footer className="relative grid grid-cols-[1fr_auto_1fr] items-center pb-[5px]">
          <div className="ml-[6px] flex h-[37px] w-[449px] items-center border-2 border-[#e0e0e0] bg-[#f4f4f4] pr-4 text-[18px] text-[#4a4a4a]">
            <h2 className="ml-10 flex-1">COMMENTS</h2>
            <button aria-label="Expand comments"><Svg size="w-3 h-3" box="0 0 12 12"><path d="M6 0v12M0 6h12" stroke="#777" strokeWidth="2.500" /></Svg></button>
          </div>
          <nav className="mb-1 flex h-[36px] items-center bg-[#f4f4f4] pl-[4px]">
            {navItems.map((n) => (
              <button key={n.name} aria-label={n.name} className={`flex items-center justify-between pr-[8px] ${n.width}`}>
                {n.icon}{n.caret && <Caret />}
              </button>
            ))}
          </nav>
          <p className="pr-[28px] text-right text-[17px] font-semibold text-[#3a3a3a]">Body1</p>
        </footer>
      </main>
    </div>
  );
}
